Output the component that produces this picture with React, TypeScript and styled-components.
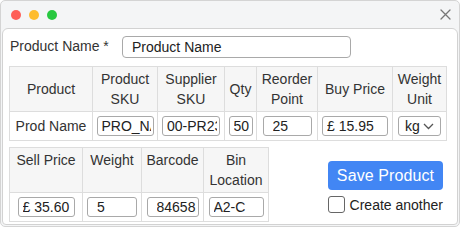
import React from 'react';
import styled, { createGlobalStyle } from 'styled-components';

const GlobalStyle = createGlobalStyle`
  body {
    margin: 0;
    background: #ffffff;
    font-family: "Liberation Sans", Arial, sans-serif;
    color: #333;
  }
  * {
    box-sizing: border-box;
  }
`;

function App() {
  return (
    <>
      <GlobalStyle />
      <Window>
        <TitleBar>
          <Dots>
            <Dot $color="#fe5f57" />
            <Dot $color="#febc2e" />
            <Dot $color="#28c840" />
          </Dots>
          <CloseButton aria-label="Close">
            <svg width="11" height="11" viewBox="0 0 11 11">
              <path d="M1 1 L10 10 M10 1 L1 10" stroke="#777" strokeWidth="1.3" strokeLinecap="round" />
            </svg>
          </CloseButton>
        </TitleBar>
        <Content>
          <NameRow>
            <NameLabel>Product Name *</NameLabel>
            <NameInput defaultValue="Product Name" />
          </NameRow>

          <Grid $width={437}>
            <colgroup>
              <Col $w={83} />
              <Col $w={65} />
              <Col $w={67} />
              <Col $w={32} />
              <Col $w={61} />
              <Col $w={75} />
              <Col $w={54} />
            </colgroup>
            <thead>
              <tr>
                <Th>Product</Th>
                <Th>Product SKU</Th>
                <Th>Supplier SKU</Th>
                <Th>Qty</Th>
                <Th>Reorder Point</Th>
                <Th>Buy Price</Th>
                <Th>Weight Unit</Th>
              </tr>
            </thead>
            <tbody>
              <tr>
                <Td>Prod Name</Td>
                <Td>
                  <CellInput $w={57} defaultValue="PRO_NAME01" />
                </Td>
                <Td>
                  <CellInput $w={58} defaultValue="00-PR2345" />
                </Td>
                <Td>
                  <CellInput $w={24} defaultValue="50" />
                </Td>
                <Td>
                  <CellInput $w={49} $pad={9} defaultValue="25" />
                </Td>
                <Td>
                  <CellInput $w={66} defaultValue="£ 15.95" />
                </Td>
                <Td>
                  <UnitSelect>
                    kg
                    <svg width="11" height="7" viewBox="0 0 11 7">
                      <path d="M1 1 L5.5 5.5 L10 1" fill="none" stroke="#555" strokeWidth="1.3" />
                    </svg>
                  </UnitSelect>
                </Td>
              </tr>
            </tbody>
          </Grid>

          <BottomRow>
            <Grid $width={259} $top>
              <colgroup>
                <Col $w={73} />
                <Col $w={59} />
                <Col $w={62} />
                <Col $w={65} />
              </colgroup>
              <thead>
                <tr>
                  <Th>Sell Price</Th>
                  <Th>Weight</Th>
                  <Th>Barcode</Th>
                  <Th>Bin Location</Th>
                </tr>
              </thead>
              <tbody>
                <tr>
                  <Td>
                    <CellInput $w={57} defaultValue="£ 35.60" />
                  </Td>
                  <Td>
                    <CellInput $w={50} $pad={9} defaultValue="5" />
                  </Td>
                  <Td>
                    <CellInput $w={52} $pad={9} defaultValue="8465829103" />
                  </Td>
                  <Td>
                    <CellInput $w={55} defaultValue="A2-C" />
                  </Td>
                </tr>
              </tbody>
            </Grid>

            <Actions>
              <SaveButton>Save Product</SaveButton>
              <CheckRow>
                <Check type="checkbox" />
                Create another
              </CheckRow>
            </Actions>
          </BottomRow>
        </Content>
      </Window>
    </>
  );
}

const Window = styled.div`
  width: 460px;
  height: 227px;
  border: 1px solid #d4d4d4;
  border-radius: 5px;
  background: #f4f5f6;
  padding: 0 1px 1px;
  display: flex;
  flex-direction: column;
  overflow: hidden;
`;

const TitleBar = styled.div`
  height: 27px;
  display: flex;
  align-items: center;
  justify-content: space-between;
  padding: 0 7px 0 9px;
`;

const Dots = styled.div`
  display: flex;
  gap: 8px;
`;

const Dot = styled.span<{ $color: string }>`
  width: 10px;
  height: 10px;
  border-radius: 50%;
  background: ${(p) => p.$color};
`;

const CloseButton = styled.button`
  border: none;
  background: none;
  padding: 0;
  width: 11px;
  height: 11px;
  display: flex;
`;

const Content = styled.div`
  flex: 1;
  background: #fff;
  border: 1px solid #d2d2d2;
  border-radius: 6px 6px 4px 4px;
  padding: 7px 6px 0;
`;

const NameRow = styled.div`
  display: flex;
  align-items: center;
`;

const NameLabel = styled.label`
  width: 113px;
  font-size: 14px;
  color: #333;
  padding-left: 1px;
  margin-top: -2px;
`;

const NameInput = styled.input`
  width: 229px;
  height: 22px;
  border: 1px solid #a9a9a9;
  border-radius: 4px;
  padding: 0 9px;
  font-family: inherit;
  font-size: 14px;
  color: #222;
  outline: none;
`;

const Grid = styled.table<{ $width: number; $top?: boolean }>`
  width: ${(p) => p.$width}px;
  table-layout: fixed;
  border-collapse: collapse;
  margin-top: 8px;
  font-size: 14px;
  color: #333;

  thead tr {
    vertical-align: ${(p) => (p.$top ? 'top' : 'middle')};
  }
`;

const Col = styled.col<{ $w: number }>`
  width: ${(p) => p.$w}px;
`;

const Th = styled.th`
  font-weight: normal;
  background: #f6f6f6;
  border: 1px solid #dddddd;
  padding: 2px 4px;
  line-height: 20px;
  height: 45px;
  text-align: center;
`;

const Td = styled.td`
  border: 1px solid #dddddd;
  padding: 4px 3px;
  height: 29px;
  text-align: center;
  white-space: nowrap;
`;

const CellInput = styled.input<{ $w: number; $pad?: number }>`
  display: block;
  margin: 0 auto;
  width: ${(p) => p.$w}px;
  height: 20px;
  border: 1px solid #a9a9a9;
  border-radius: 3px;
  padding: 0 2px 0 ${(p) => p.$pad ?? 4}px;
  font-family: inherit;
  font-size: 14px;
  color: #222;
  outline: none;
`;

const UnitSelect = styled.div`
  width: 43px;
  height: 20px;
  margin: 0 auto;
  border: 1px solid #a9a9a9;
  border-radius: 3px;
  display: flex;
  align-items: center;
  gap: 3px;
  padding-left: 6px;
  font-size: 14px;
  color: #222;
`;

const BottomRow = styled.div`
  display: flex;
  justify-content: space-between;
  align-items: flex-start;
  width: 434px;
  margin-top: -2px;
`;

const Actions = styled.div`
  display: flex;
  flex-direction: column;
  gap: 6px;
  padding-top: 22px;
  width: 115px;
`;

const SaveButton = styled.button`
  height: 29px;
  border: none;
  border-radius: 4px;
  background: #4286f4;
  color: #fff;
  font-family: inherit;
  font-size: 16px;
  letter-spacing: 0.1px;
  padding: 0;
`;

const CheckRow = styled.label`
  display: flex;
  align-items: center;
  gap: 5px;
  font-size: 14px;
  color: #222;
  white-space: nowrap;
`;

const Check = styled.input`
  appearance: none;
  width: 17px;
  height: 17px;
  margin: 0;
  border: 1.5px solid #666;
  border-radius: 3px;
  background: #fff;
`;

export default App;
